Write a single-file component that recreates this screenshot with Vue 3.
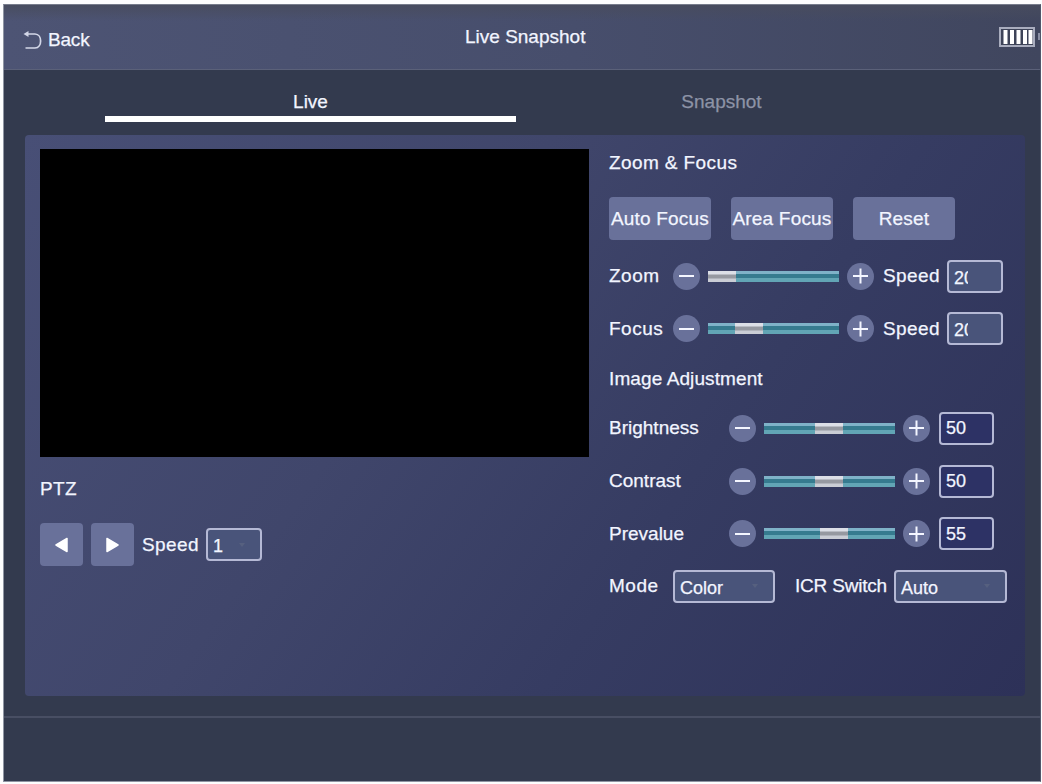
<script setup>
import { reactive, ref } from 'vue';

const tab = ref('Live');
const tabs = ['Live', 'Snapshot'];
const focusActions = ['Auto Focus', 'Area Focus', 'Reset'];

// thumb offset in percent of the track
const lens = reactive([
    { name: 'Zoom', pos: 0, speed: '20' },
    { name: 'Focus', pos: 20.6, speed: '20' },
]);

const image = reactive([
    { name: 'Brightness', pos: 38.6, value: 50 },
    { name: 'Contrast', pos: 38.6, value: 50 },
    { name: 'Prevalue', pos: 42.8, value: 55 },
]);
</script>

<template>
    <div class="screen">
        <header class="header">
            <div class="back">
                <svg width="20" height="20" viewBox="0 0 20 20">
                    <path d="M3 4H12C19.5 4 19.5 18 12 18H2.5" fill="none" stroke="#d3d7e8" stroke-width="1.7" />
                    <path d="M.5 4L5.5 1V7Z" fill="#d3d7e8" />
                </svg>
                <span class="back-text">Back</span>
            </div>
            <h1 class="title">Live Snapshot</h1>
            <div class="power">
                <svg width="42" height="20" viewBox="0 0 42 20">
                    <rect x="2" y="1" width="34" height="18" fill="#3d4358" stroke="#a9adbe" stroke-width="2" />
                    <path d="M7.5 3V17M14 3V17M20.5 3V17M27 3V17M32.5 3V17" stroke="#fff" stroke-width="4" />
                    <path d="M41 6V13" stroke="#8b90a5" stroke-width="2" />
                </svg>
            </div>
        </header>

        <nav class="tabs">
            <div v-for="t in tabs" :key="t" class="tab" :class="{ active: tab === t }" @click="tab = t">{{ t }}</div>
        </nav>

        <main class="panel">
            <section class="left">
                <div class="video"></div>
                <h2 class="ptz">PTZ</h2>
                <div class="ptz-row">
                    <button class="arrow">
                        <svg width="13" height="16" viewBox="0 0 13 16"><path d="M12 1.5V14.5L1 8Z" fill="#fff" stroke="#fff" stroke-width="1.5" stroke-linejoin="round" /></svg>
                    </button>
                    <button class="arrow">
                        <svg width="13" height="16" viewBox="0 0 13 16"><path d="M1 1.5V14.5L12 8Z" fill="#fff" stroke="#fff" stroke-width="1.5" stroke-linejoin="round" /></svg>
                    </button>
                    <span class="speed">Speed</span>
                    <div class="box filled"><span>1</span><i class="caret"></i></div>
                </div>
            </section>

            <section class="right">
                <h2 class="group">Zoom &amp; Focus</h2>
                <div class="actions">
                    <button v-for="a in focusActions" :key="a" class="action">{{ a }}</button>
                </div>
                <div v-for="row in lens" :key="row.name" class="row">
                    <span class="name short">{{ row.name }}</span>
                    <button class="round minus"></button>
                    <div class="track"><div class="thumb" :style="{ left: row.pos + '%' }"></div></div>
                    <button class="round plus"></button>
                    <span class="speed">Speed</span>
                    <div class="box filled"><span class="clip">{{ row.speed }}</span></div>
                </div>
                <h2 class="group second">Image Adjustment</h2>
                <div v-for="row in image" :key="row.name" class="row">
                    <span class="name">{{ row.name }}</span>
                    <button class="round minus"></button>
                    <div class="track"><div class="thumb" :style="{ left: row.pos + '%' }"></div></div>
                    <button class="round plus"></button>
                    <div class="box value"><span>{{ row.value }}</span></div>
                </div>
                <div class="row">
                    <span class="name short">Mode</span>
                    <div class="box filled mode"><span>Color</span><i class="caret"></i></div>
                    <span class="icr">ICR Switch</span>
                    <div class="box filled auto"><span>Auto</span><i class="caret"></i></div>
                </div>
            </section>
        </main>

        <footer class="footer"></footer>
    </div>
</template>

<style>
body {
    background: #fdfdfe;
    overflow: hidden;
}
</style>

<style scoped>
.screen {
    box-sizing: border-box;
    display: flex;
    flex-direction: column;
    width: 1038px;
    height: 778px;
    margin: 4px 0 2px 3px;
    border: 1px solid #8f95a3;
    border-top-color: #777c8c;
    border-right-color: #51566a;
    background: #333a4e;
    color: #f2f5ff;
    font-family: "Liberation Sans", Arial, sans-serif;
    font-size: 19px;
    line-height: 24px;
    -webkit-text-stroke: .25px currentColor;
}

h1,
h2 {
    margin: 0;
    font-size: inherit;
    font-weight: normal;
}

button {
    padding: 0;
    border: none;
    background: #69719a;
    color: inherit;
    font: inherit;
}

svg {
    display: block;
}

.header {
    display: grid;
    grid-template-columns: 1fr auto 1fr;
    align-items: center;
    box-sizing: border-box;
    height: 65px;
    padding: 3px 0 0 19px;
    border-bottom: 1px solid #5b6179;
    background: linear-gradient(180deg, rgba(72, 76, 94, .9), rgba(72, 76, 94, 0) 25%), linear-gradient(90deg, #4d5474, #474e6c 55%, #40465e);
}

.back {
    display: flex;
    align-items: center;
    gap: 5px;
    padding-top: 2px;
}

.back-text {
    letter-spacing: -.2px;
}

.title {
    width: 122px;
    margin-left: -11px;
    padding-bottom: 3px;
    font-size: 19px;
    white-space: nowrap;
}

.power {
    display: flex;
    justify-content: flex-end;
    padding: 0 0 4px;
}

.tabs {
    display: flex;
    height: 52px;
    padding-left: 101px;
}

.tab {
    box-sizing: border-box;
    width: 411px;
    padding-top: 20px;
    text-align: center;
    color: #8d93a6;
    border-bottom: 6px solid transparent;
}

.tab.active {
    color: #f2f5ff;
    border-bottom-color: #fff;
}

.panel {
    display: flex;
    gap: 20px;
    box-sizing: border-box;
    width: 1000px;
    height: 561px;
    margin: 13px 0 0 21px;
    padding: 14px 15px;
    border-radius: 4px;
    background: linear-gradient(125deg, #484f76 0%, #40466b 38%, #363c62 65%, #2d3158 100%);
}

.left {
    width: 549px;
}

.video {
    height: 308px;
    background: #000;
}

.ptz {
    margin: 20px 0 22px;
    letter-spacing: .3px;
}

.ptz-row {
    display: flex;
    align-items: center;
}

.arrow {
    display: flex;
    align-items: center;
    justify-content: center;
    width: 43px;
    height: 43px;
    margin-right: 8px;
    border-radius: 4px;
}

.speed {
    width: 56px;
    margin-right: 8px;
    letter-spacing: .4px;
}

.right {
    width: 400px;
}

.group {
    margin-top: 2px;
    letter-spacing: .4px;
}

.actions {
    display: flex;
    gap: 20px;
    margin: 22px 0 10px;
}

.action {
    width: 102px;
    height: 43px;
    border-radius: 4px;
    letter-spacing: .2px;
    white-space: nowrap;
}

.row {
    display: flex;
    align-items: center;
    height: 52.6px;
}

.group.second {
    margin: 12px 0 11px;
    letter-spacing: .1px;
}

.name {
    width: 120px;
}

.name.short {
    width: 64px;
    letter-spacing: .5px;
}

.round {
    position: relative;
    flex: none;
    width: 27px;
    height: 27px;
    border-radius: 50%;
}

.round::before,
.plus::after {
    content: "";
    position: absolute;
    left: 6px;
    top: 12.5px;
    width: 15px;
    height: 2px;
    background: #f4f6ff;
}

.plus::after {
    transform: rotate(90deg);
}

.plus {
    margin-right: 9px;
}

.track {
    position: relative;
    width: 131px;
    height: 11px;
    margin: 0 8px;
    background: linear-gradient(180deg, #7fb2c8 0 3px, #367b8f 3px 7px, #62a5b5 7px);
}

.thumb {
    position: absolute;
    top: 0;
    width: 28px;
    height: 11px;
    background: linear-gradient(180deg, #dcdfe7 0 3px, #9699a1 4px 7px, #cacdd5 8px);
}

.box {
    display: flex;
    align-items: center;
    justify-content: space-between;
    box-sizing: border-box;
    width: 56px;
    height: 33px;
    padding: 3px 20px 0 5px;
    border: 2px solid #b5b9d5;
    border-radius: 4px;
    font-size: 18px;
}

.filled {
    background: #49547a;
}

.value {
    width: 55px;
    background: #2d3265;
    padding-top: 0;
}

.clip {
    width: 14px;
    overflow: hidden;
}

.caret {
    border: 3px solid transparent;
    border-top: 4px solid #56607f;
    margin-right: -5px;
}

.mode {
    width: 102px;
    margin-right: 20px;
}

.icr {
    width: 99px;
    letter-spacing: -.2px;
    white-space: nowrap;
}

.auto {
    width: 113px;
}

.footer {
    flex: 1;
    margin-top: 20px;
    border-top: 2px solid #484e63;
}
</style>
